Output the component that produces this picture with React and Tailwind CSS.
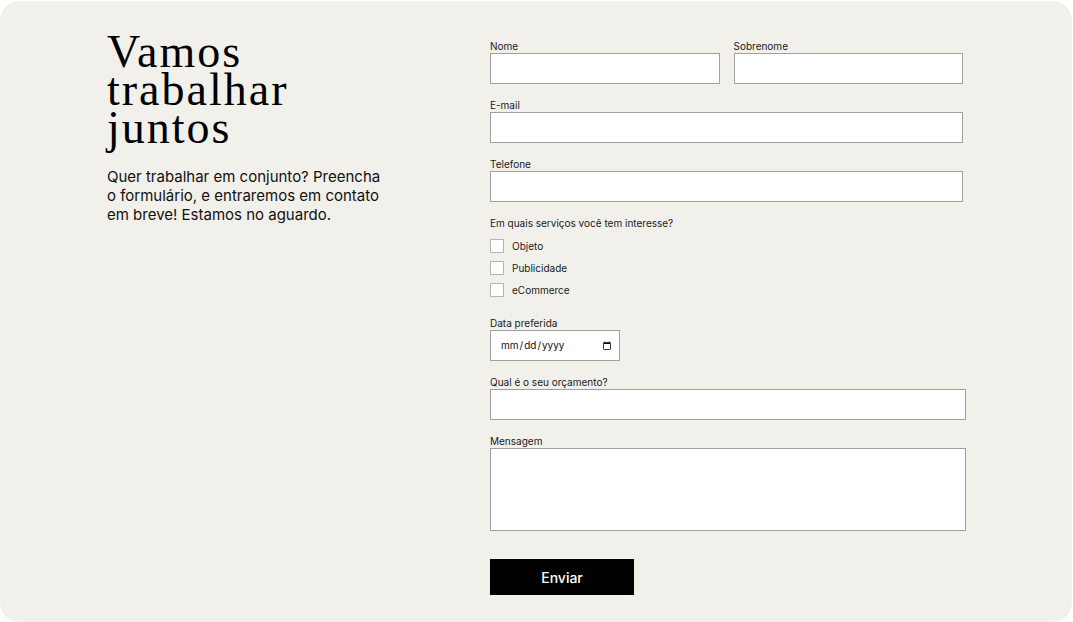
import { useState } from "react"

const SERVICES = ["Objeto", "Publicidade", "eCommerce"]

function Field({ label, children }) {
  return (
    <div className="flex flex-col">
      <label className="text-[10px] leading-[12px] mb-px text-[#1a1a1a]">{label}</label>
      {children}
    </div>
  )
}

const inputCls = "h-[31px] w-full bg-white border border-[#a0a0a0] px-2 text-[12px] outline-none"

export default function App() {
  const [checked, setChecked] = useState({})

  return (
    <div className="min-h-screen bg-white font-['Inter','Liberation_Sans',sans-serif]">
      <div className="w-[1072px] h-[621px] mt-px bg-[#f1f0eb] rounded-[20px] flex pt-[32px] pl-[107px]">
        {/* Left intro */}
        <div className="w-[383px] flex flex-col">
          <h1 className="font-['Liberation_Serif','Times_New_Roman',serif] text-[46px] leading-[38px] tracking-[2px] text-black">
            Vamos<br />trabalhar<br />juntos
          </h1>
          <p className="mt-[20px] text-[15px] leading-[19px] text-[#111] whitespace-nowrap">
            Quer trabalhar em conjunto? Preencha<br />
            o formulário, e entraremos em contato<br />
            em breve! Estamos no aguardo.
          </p>
        </div>

        {/* Form */}
        <form className="w-[476px] pt-[7px] flex flex-col" onSubmit={(e) => e.preventDefault()}>
          <div className="w-[473px] flex flex-col gap-[15px]">
            <div className="grid grid-cols-2 gap-[14px]">
              <Field label="Nome"><input className={inputCls} /></Field>
              <Field label="Sobrenome"><input className={inputCls} /></Field>
            </div>
            <Field label="E-mail"><input type="email" className={inputCls} /></Field>
            <Field label="Telefone"><input type="tel" className={inputCls} /></Field>
          </div>

          <p className="mt-[15px] text-[10px] leading-[12px] text-[#1a1a1a]">
            Em quais serviços você tem interesse?
          </p>
          <div className="mt-[10px] flex flex-col gap-[8px]">
            {SERVICES.map((s) => (
              <label key={s} className="flex items-center gap-[8px] h-[14px] text-[10px] text-[#1a1a1a]">
                <input
                  type="checkbox"
                  checked={!!checked[s]}
                  onChange={() => setChecked({ ...checked, [s]: !checked[s] })}
                  className="appearance-none w-[14px] h-[14px] bg-white border border-[#b5b5b5] checked:bg-black"
                />
                {s}
              </label>
            ))}
          </div>

          <div className="mt-[20px]">
            <Field label="Data preferida">
              <input
                type="date"
                className="h-[31px] w-[130px] bg-white border border-[#a0a0a0] pl-[9px] pr-[5px] text-[10px] text-[#111] outline-none"
              />
            </Field>
          </div>

          <div className="mt-[15px] flex flex-col gap-[15px]">
            <Field label="Qual é o seu orçamento?"><input className={inputCls} /></Field>
            <Field label="Mensagem">
              <textarea className="h-[83px] w-full bg-white border border-[#a0a0a0] p-2 text-[12px] outline-none resize-none" />
            </Field>
          </div>

          <button
            type="submit"
            className="mt-[28px] w-[144px] h-[36px] bg-black text-white text-[14px] font-medium"
          >
            Enviar
          </button>
        </form>
      </div>
    </div>
  )
}
